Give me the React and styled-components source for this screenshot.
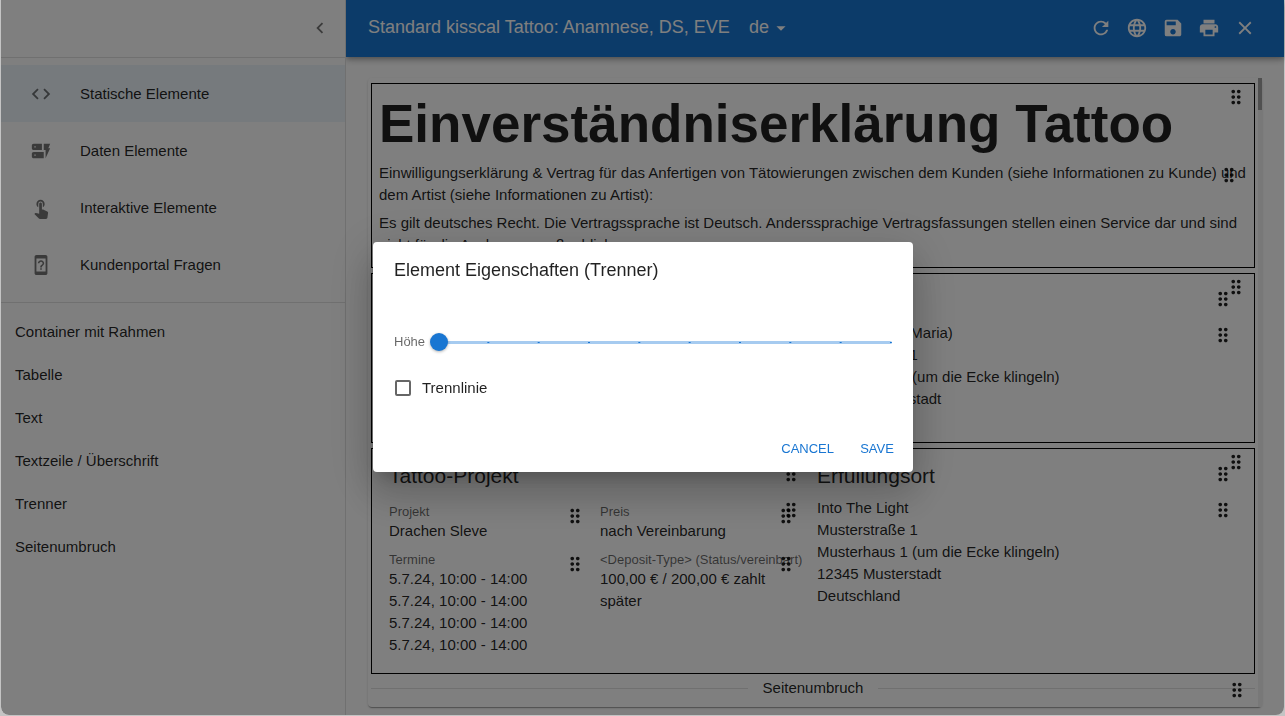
import React, { useState } from "react";
import styled, { createGlobalStyle, css } from "styled-components";
import {
  MdArrowDropDown,
  MdChevronLeft,
  MdClose,
  MdCode,
  MdDeviceUnknown,
  MdDragIndicator,
  MdDynamicForm,
  MdLanguage,
  MdPrint,
  MdRefresh,
  MdSave,
  MdTouchApp,
} from "react-icons/md";

const color = {
  primary: "#1976d2",
  text: "rgba(0, 0, 0, 0.87)",
  muted: "rgba(0, 0, 0, 0.6)",
  icon: "rgba(0, 0, 0, 0.54)",
  divider: "rgba(0, 0, 0, 0.12)",
};

const GlobalStyle = createGlobalStyle`
  *, *::before, *::after { box-sizing: border-box; }
  body {
    margin: 0;
    background: #c4c4c4;
    color: ${color.text};
    font: 15px/22px "Liberation Sans", Arial, sans-serif;
  }
  h1, h2, p, ul { margin: 0; padding: 0; font-weight: 400; }
  button, select, input { font: inherit; color: inherit; margin: 0; }
  button { border: 0; background: none; padding: 0; cursor: pointer; }
`;

const Window = styled.div`
  display: flex;
  min-height: calc(100vh - 1px);
  margin: 0 1px 1px;
  border-radius: 0 0 8px 8px;
  background: #fff;
`;

/* ---------- sidebar ---------- */

const Sidebar = styled.aside`
  position: relative;
  z-index: 1;
  flex: 0 0 345px;
  border-right: 1px solid ${color.divider};
  border-bottom-left-radius: 8px;
  background: #fff;
`;

const SidebarTop = styled.div`
  display: flex;
  align-items: center;
  justify-content: flex-end;
  height: 58px;
  padding: 0 7px 2px 0;
  border-bottom: 1px solid ${color.divider};
`;

const IconButton = styled.button`
  display: grid;
  place-items: center;
  width: 36px;
  height: 36px;
  border-radius: 50%;
  color: ${(p) => (p.$light ? "#fff" : color.icon)};
`;

const Categories = styled.ul`
  list-style: none;
  padding: 7px 0 9px;
  border-bottom: 1px solid ${color.divider};
`;

const Category = styled.button`
  display: flex;
  align-items: center;
  width: 100%;
  height: 57px;
  padding: 0 14px 0 29px;
  text-align: left;
  ${(p) => p.$active && css`background: #edf4fb;`}

  svg {
    flex: none;
    margin-right: 28px;
    color: ${color.icon};
  }
`;

const Elements = styled.ul`
  list-style: none;
  padding: 7px 0;
`;

const ElementItem = styled.button`
  display: block;
  width: 100%;
  height: 43px;
  padding: 0 14px;
  text-align: left;
`;

/* ---------- app bar ---------- */

const Content = styled.div`
  flex: 1;
  min-width: 0;
  display: flex;
  flex-direction: column;
`;

const AppBar = styled.header`
  display: flex;
  align-items: center;
  height: 57px;
  padding: 0 21px 2px 22px;
  background: ${color.primary};
  color: #fff;
  box-shadow: 0 2px 4px -1px rgba(0, 0, 0, 0.2), 0 4px 5px rgba(0, 0, 0, 0.14),
    0 1px 10px rgba(0, 0, 0, 0.12);
`;

const AppTitle = styled.h1`
  font-size: 18px;
  line-height: 29px;
`;

const LanguagePicker = styled.label`
  display: flex;
  align-items: center;
  margin: 0 auto 0 19px;
`;

const LanguageSelect = styled.select`
  appearance: none;
  border: 0;
  padding: 0;
  background: none;
  font-size: 18px;
  line-height: 29px;
  option { color: #000; }
`;

const Actions = styled.div`
  display: flex;
`;

/* ---------- document ---------- */

const Main = styled.main`
  flex: 1;
  display: flex;
  padding: 21px 22px 8px;
`;

const Paper = styled.div`
  flex: 1;
  display: flex;
  min-width: 0;
  border-radius: 4px;
  box-shadow: 0 2px 1px -1px rgba(0, 0, 0, 0.2), 0 1px 1px rgba(0, 0, 0, 0.14),
    0 1px 3px rgba(0, 0, 0, 0.12);
`;

const Document = styled.div`
  flex: 1;
  min-width: 0;
  display: flex;
  flex-direction: column;
  gap: 5px;
  padding: 5px 3px 8px;
`;

const ScrollTrack = styled.div`
  width: 4px;
  background: #f1f1f1;
`;

const ScrollThumb = styled.div`
  height: 32px;
  background: #a0a0a0;
`;

const Block = styled.div`
  position: relative;
`;

const Frame = styled(Block)`
  border: 1px solid #000;
  padding: ${(p) => (p.$columns ? "12px 13px 10px" : "8px 7px 11px")};
  ${(p) =>
    p.$columns &&
    css`
      display: grid;
      grid-template-columns: 1fr 1fr;
      gap: 8px;
    `}
`;

const HandleButton = styled.button`
  position: absolute;
  top: 2px;
  right: 7px;
  display: block;
  height: 22px;
  cursor: grab;
`;

const DocTitle = styled.h1`
  margin-bottom: 7px;
  font-size: 53px;
  line-height: 63px;
  font-weight: 700;
`;

const Paragraph = styled.p`
  & + & { margin-top: 6px; }
`;

const Column = styled.div`
  min-width: 0;
  padding-left: ${(p) => (p.$indent ? "4px" : "0")};
`;

const SectionTitle = styled.h2`
  min-height: 29px;
  margin-bottom: 7px;
  font-size: 21px;
  line-height: 29px;
`;

const Fields = styled(Block)`
  display: grid;
  grid-template-columns: 1fr 1fr;
  gap: 9px 7px;
  padding: 6px 5px 7px 0;
`;

const FieldLabel = styled.div`
  font-size: 13px;
  line-height: 17px;
  color: ${color.muted};
  white-space: nowrap;
`;

const PageBreak = styled(Block)`
  display: flex;
  align-items: center;
  gap: 15px;
  margin-top: -2px;

  &::before,
  &::after {
    content: "";
    flex: 1;
    border-top: 1px solid ${color.divider};
  }
`;

/* ---------- dialog ---------- */

const Backdrop = styled.div`
  position: fixed;
  z-index: 2;
  inset: 0 1px 1px;
  display: flex;
  align-items: center;
  justify-content: center;
  padding: 0 0 1px 1px;
  border-radius: 0 0 8px 8px;
  background: rgba(0, 0, 0, 0.5);
`;

const Dialog = styled.form`
  width: 540px;
  max-width: calc(100% - 58px);
  border-radius: 4px;
  background: #fff;
  box-shadow: 0 11px 15px -7px rgba(0, 0, 0, 0.2),
    0 24px 38px 3px rgba(0, 0, 0, 0.14), 0 9px 46px 8px rgba(0, 0, 0, 0.12);
`;

const DialogTitle = styled.h2`
  padding: 14px 21px;
  font-size: 18px;
  line-height: 29px;
`;

const DialogBody = styled.div`
  display: grid;
  gap: 24px;
  padding: 32px 21px 26px;
`;

const SliderRow = styled.div`
  display: flex;
  align-items: center;
  gap: 14px;
  height: 22px;

  label {
    font-size: 13px;
    color: ${color.muted};
  }
`;

const Track = styled.div`
  flex: 1;
  display: flex;
  align-items: center;
  height: 3px;
  border-radius: 2px;
  background: linear-gradient(to left, ${color.primary} 2px, transparent 2px) 0 1px /
      calc(100% / 9) 1px repeat-x,
    #a6cbf0;
`;

const Range = styled.input`
  appearance: none;
  flex: 1;
  height: 18px;
  margin: 0 -9px;
  background: transparent;
  cursor: pointer;

  &::-webkit-slider-thumb {
    appearance: none;
    width: 18px;
    height: 18px;
    border-radius: 50%;
    background: ${color.primary};
    box-shadow: 0 1px 3px rgba(0, 0, 0, 0.3);
  }
`;

const CheckLabel = styled.label`
  display: flex;
  align-items: center;
  gap: 11px;
  padding-left: 1px;
`;

const Checkbox = styled.input`
  appearance: none;
  width: 16px;
  height: 16px;
  border: 2px solid ${color.muted};
  border-radius: 2px;

  &:checked {
    border-color: ${color.primary};
    background: ${color.primary};
  }
`;

const DialogActions = styled.div`
  display: flex;
  justify-content: flex-end;
  gap: 7px;
  padding: 7px;
`;

const TextButton = styled.button`
  min-width: 58px;
  height: 33px;
  padding: 0 7px;
  border-radius: 4px;
  font-size: 13px;
  text-transform: uppercase;
  color: ${color.primary};
`;

const categories = [
  { label: "Statische Elemente", Icon: MdCode },
  { label: "Daten Elemente", Icon: MdDynamicForm },
  { label: "Interaktive Elemente", Icon: MdTouchApp },
  { label: "Kundenportal Fragen", Icon: MdDeviceUnknown },
];

const elements = [
  "Container mit Rahmen",
  "Tabelle",
  "Text",
  "Textzeile / Überschrift",
  "Trenner",
  "Seitenumbruch",
];

const tools = [
  { label: "Neu laden", Icon: MdRefresh },
  { label: "Sprache", Icon: MdLanguage },
  { label: "Speichern", Icon: MdSave },
  { label: "Drucken", Icon: MdPrint },
  { label: "Schließen", Icon: MdClose },
];

const address = [
  "Musterstraße 1",
  "Musterhaus 1 (um die Ecke klingeln)",
  "12345 Musterstadt",
  "Deutschland",
];

const Handle = () => (
  <HandleButton type="button" aria-label="Verschieben">
    <MdDragIndicator size={22} />
  </HandleButton>
);

const Lines = ({ items }) => items.map((line, i) => <div key={i}>{line}</div>);

const Section = ({ title, children }) => (
  <Block>
    <SectionTitle>{title}</SectionTitle>
    <Handle />
    {children}
  </Block>
);

const Field = ({ label, lines }) => (
  <Block>
    <FieldLabel>{label}</FieldLabel>
    <Lines items={lines} />
    <Handle />
  </Block>
);

export default function App() {
  const [height, setHeight] = useState(0);
  const [active, setActive] = useState(0);

  return (
    <>
      <GlobalStyle />
      <Window>
        <Sidebar>
          <SidebarTop>
            <IconButton type="button" aria-label="Einklappen">
              <MdChevronLeft size={22} />
            </IconButton>
          </SidebarTop>
          <Categories>
            {categories.map(({ label, Icon }, i) => (
              <li key={label}>
                <Category type="button" $active={i === active} onClick={() => setActive(i)}>
                  <Icon size={22} />
                  {label}
                </Category>
              </li>
            ))}
          </Categories>
          <Elements>
            {elements.map((label) => (
              <li key={label}>
                <ElementItem type="button">{label}</ElementItem>
              </li>
            ))}
          </Elements>
        </Sidebar>

        <Content>
          <AppBar>
            <AppTitle>Standard kisscal Tattoo: Anamnese, DS, EVE</AppTitle>
            <LanguagePicker>
              <LanguageSelect aria-label="Sprache" defaultValue="de">
                <option value="de">de</option>
                <option value="en">en</option>
              </LanguageSelect>
              <MdArrowDropDown size={22} />
            </LanguagePicker>
            <Actions>
              {tools.map(({ label, Icon }) => (
                <IconButton key={label} type="button" aria-label={label} $light>
                  <Icon size={22} />
                </IconButton>
              ))}
            </Actions>
          </AppBar>

          <Main>
            <Paper>
              <Document>
                <Frame>
                  <DocTitle>Einverständniserklärung Tattoo</DocTitle>
                  <Block>
                    <Paragraph>
                      Einwilligungserklärung &amp; Vertrag für das Anfertigen von Tätowierungen
                      zwischen dem Kunden (siehe Informationen zu Kunde) und dem Artist (siehe
                      Informationen zu Artist):
                    </Paragraph>
                    <Paragraph>
                      Es gilt deutsches Recht. Die Vertragssprache ist Deutsch. Anderssprachige
                      Vertragsfassungen stellen einen Service dar und sind nicht für die Auslegung
                      maßgeblich.
                    </Paragraph>
                    <Handle />
                  </Block>
                  <Handle />
                </Frame>

                <Frame $columns>
                  <Column $indent />
                  <Column>
                    <Section title="Kunde">
                      <Block>
                        <Lines items={["Erika Muster (Maria)", ...address]} />
                        <Handle />
                      </Block>
                    </Section>
                  </Column>
                  <Handle />
                </Frame>

                <Frame $columns>
                  <Column $indent>
                    <Section title="Tattoo-Projekt">
                      <Fields>
                        <Field label="Projekt" lines={["Drachen Sleve"]} />
                        <Field label="Preis" lines={["nach Vereinbarung"]} />
                        <Field label="Termine" lines={Array(4).fill("5.7.24, 10:00 - 14:00")} />
                        <Field
                          label="<Deposit-Type> (Status/vereinbart)"
                          lines={["100,00 € / 200,00 € zahlt später"]}
                        />
                        <Handle />
                      </Fields>
                    </Section>
                  </Column>
                  <Column>
                    <Section title="Erfüllungsort">
                      <Block>
                        <Lines items={["Into The Light", ...address]} />
                        <Handle />
                      </Block>
                    </Section>
                  </Column>
                  <Handle />
                </Frame>

                <PageBreak>
                  Seitenumbruch
                  <Handle />
                </PageBreak>
              </Document>
              <ScrollTrack>
                <ScrollThumb />
              </ScrollTrack>
            </Paper>
          </Main>
        </Content>
      </Window>

      <Backdrop>
        <Dialog role="dialog" aria-labelledby="dialog-title" onSubmit={(e) => e.preventDefault()}>
          <DialogTitle id="dialog-title">Element Eigenschaften (Trenner)</DialogTitle>
          <DialogBody>
            <SliderRow>
              <label htmlFor="height">Höhe</label>
              <Track>
                <Range
                  id="height"
                  type="range"
                  min="0"
                  max="9"
                  value={height}
                  onChange={(e) => setHeight(Number(e.target.value))}
                />
              </Track>
            </SliderRow>
            <CheckLabel>
              <Checkbox type="checkbox" />
              Trennlinie
            </CheckLabel>
          </DialogBody>
          <DialogActions>
            <TextButton type="button">Cancel</TextButton>
            <TextButton type="submit">Save</TextButton>
          </DialogActions>
        </Dialog>
      </Backdrop>
    </>
  );
}
